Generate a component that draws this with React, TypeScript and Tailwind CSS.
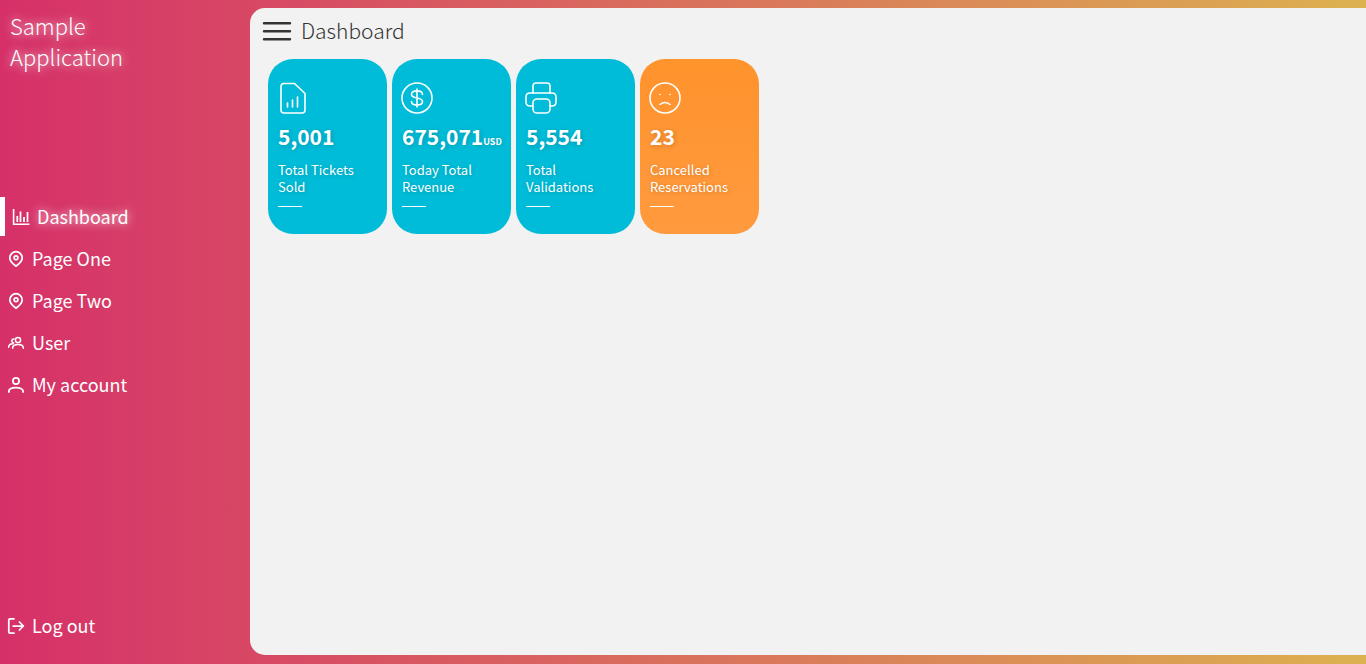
import type { ReactNode } from "react";

const glow = "[text-shadow:0_0_10px_#ffffffe0]";

function SmallIcon({ children }: { children: ReactNode }) {
  return (
    <svg
      className="size-4 shrink-0 overflow-visible"
      viewBox="0 0 16 16"
      fill="none"
      stroke="currentColor"
      strokeWidth="1.75"
      strokeLinecap="round"
      strokeLinejoin="round"
      aria-hidden="true"
    >
      {children}
    </svg>
  );
}

const chart = (
  <SmallIcon>
    <path d="M.6 0v15.200H16.500" strokeLinecap="butt" strokeLinejoin="miter" strokeWidth="1.6" />
    <path d="M4.300 7v6M7.500 2.500v10.500M11 8v5M14.500 3v10" strokeLinecap="butt" />
  </SmallIcon>
);
const pin = (
  <SmallIcon>
    <path d="M8 15.200C5.600 13.300 1.800 10.600 1.800 6.900a6.200 6.200 0 0 1 12.400 0c0 3.700-3.800 6.400-6.200 8.300Z" />
    <circle cx="8" cy="6.700" r="1.900" />
  </SmallIcon>
);
const users = (
  <SmallIcon>
    <g strokeWidth="1.5">
      <circle cx="10" cy="5" r="2.600" />
      <path d="M4.700 13.200v-.4c0-4.400 10.600-4.400 10.600 0v.4M6 3.900a2 2 0 1 0-.3 4M.7 12.200c0-2.300 1.800-3.500 4.200-3.500" />
    </g>
  </SmallIcon>
);
const user = (
  <SmallIcon>
    <circle cx="8" cy="4" r="3.100" />
    <path d="M.9 15v-.7c0-5 14.200-5 14.200 0v.7" />
  </SmallIcon>
);
const logout = (
  <SmallIcon>
    <path d="M6 .8H2Q.8.8.8 2v12q0 1.200 1.200 1.200h4M5.200 8h10M11.400 4l4 4-4 4" />
  </SmallIcon>
);

const nav = [
  { label: "Dashboard", icon: chart, active: true },
  { label: "Page One", icon: pin, active: false },
  { label: "Page Two", icon: pin, active: false },
  { label: "User", icon: users, active: false },
  { label: "My account", icon: user, active: false },
];

const cards = [
  {
    label: "Total Tickets Sold",
    value: "5,001",
    unit: "",
    color: "bg-[#00bcd8]",
    icon: (
      <>
        <path d="M8 1.500h9.500L28 11.500V28q0 3-3 3H7q-3 0-3-3V4.500q0-3 3-3h1" />
        <path d="M10.500 21v4M15.500 18v7M20.500 15v10" />
      </>
    ),
  },
  {
    label: "Today Total Revenue",
    value: "675,071",
    unit: "USD",
    color: "bg-[#00bcd8]",
    icon: (
      <>
        <circle cx="16" cy="16" r="15" />
        <path d="M16 7v18M21.500 12.500c0-2.400-2-3.600-5.500-3.600s-5.500 1.200-5.500 3.600c0 5 11 2 11 7 0 2.400-2 3.600-5.500 3.600s-5.500-1.200-5.500-3.600" />
      </>
    ),
  },
  {
    label: "Total Validations",
    value: "5,554",
    unit: "",
    color: "bg-[#00bcd8]",
    icon: (
      <>
        <path d="M8 11V4q0-3 3-3h11q3 0 3 3v7" />
        <path d="M7.500 24H5q-4 0-4-4v-5q0-4 4-4h22q4 0 4 4v5q0 4-4 4h-2" />
        <rect x="8" y="17" width="17" height="14" rx="4" />
      </>
    ),
  },
  {
    label: "Cancelled Reservations",
    value: "23",
    unit: "",
    color: "bg-linear-to-b from-[#ff932c] to-[#ff9a3e]",
    icon: (
      <>
        <circle cx="16" cy="16" r="15" />
        <path d="M11 22.500q5-4 10 0M11 12.500h.1M21 12.500h.1" />
      </>
    ),
  },
];

export default function App() {
  return (
    <div className="flex min-h-screen bg-linear-to-r/srgb from-[#d63069] to-[#dcb150] font-['Noto_Sans_CJK_SC','Noto_Sans',sans-serif] text-white">
      <aside className="flex w-[250px] shrink-0 flex-col pb-4">
        <h1 className={`h-[197px] w-40 px-[10px] pt-[10px] text-[22px] leading-[31px] font-light ${glow}`}>
          Sample Application
        </h1>
        <nav aria-label="Main" className="flex flex-col gap-[3px]">
          {nav.map((item) => (
            <a
              key={item.label}
              href="#"
              aria-current={item.active ? "page" : undefined}
              className={`flex h-[39px] items-center gap-2 px-2 text-[18px] leading-6 ${
                item.active ? `border-l-[5px] border-white ${glow}` : ""
              }`}
            >
              {item.icon}
              <span className="pb-0.5">{item.label}</span>
            </a>
          ))}
        </nav>
        <button type="button" className="mt-auto flex h-11 items-center gap-2 px-2 text-left text-[18px] leading-6">
          {logout}
          <span className="pb-0.5">Log out</span>
        </button>
      </aside>
      <main className="mt-2 mb-[9px] min-w-0 grow rounded-l-[15px] bg-[#f2f2f2] pl-3">
        <header className="flex h-[46px] items-center gap-[9px] text-[#333333]">
          <button type="button" aria-label="Toggle menu">
            <svg
              className="block h-[22px] w-[30px]"
              viewBox="0 0 30 22"
              fill="none"
              stroke="currentColor"
              strokeWidth="2.400"
              strokeLinecap="round"
              aria-hidden="true"
            >
              <path d="M2 3.200h26M2 11.200h26M2 19.300h26" />
            </svg>
          </button>
          <h2 className="pb-0.5 text-[21px] leading-7 font-light">Dashboard</h2>
        </header>
        <section aria-label="Summary" className="flex flex-wrap gap-[5px] pt-[5px] pl-[6px]">
          {cards.map((card) => (
            <article
              key={card.label}
              className={`h-[175px] w-[119px] rounded-[25px] px-[10px] pt-[23px] [text-shadow:1px_1px_5px_#00000033] ${card.color}`}
            >
              <svg
                className="-ml-px block size-8"
                viewBox="0 0 32 32"
                fill="none"
                stroke="currentColor"
                strokeWidth="1.600"
                strokeLinecap="round"
                strokeLinejoin="round"
                aria-hidden="true"
              >
                {card.icon}
              </svg>
              <p className="mt-[6px] text-[21px] leading-8 font-bold whitespace-nowrap">
                {card.value}
                {card.unit && <small className="text-[9px] leading-none">{card.unit}</small>}
              </p>
              <h3 className="mt-[9px] pr-2 text-[13px] leading-[17px]">{card.label}</h3>
              <div className="mt-[11px] h-px w-6 bg-white" />
            </article>
          ))}
        </section>
      </main>
    </div>
  );
}
